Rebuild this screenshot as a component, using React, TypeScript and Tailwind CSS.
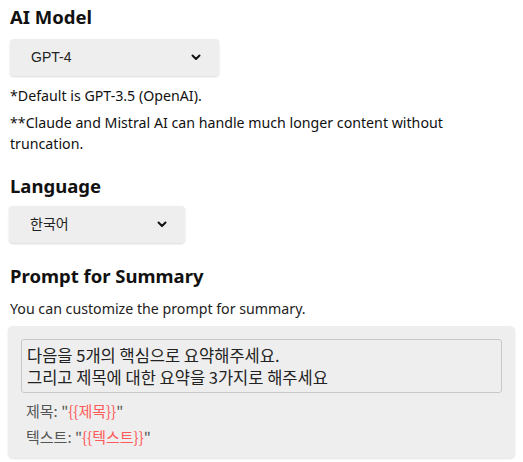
import React from "react";

const font = { fontFamily: '"Segoe UI", "Noto Sans", "Noto Sans CJK KR", sans-serif' };

function Chevron() {
  return (
    <svg width="10" height="7" viewBox="0 0 10 7" fill="none">
      <path d="M1.5 1.5 L5 5 L8.5 1.5" stroke="#111" strokeWidth="2" strokeLinecap="round" strokeLinejoin="round" />
    </svg>
  );
}

function Select({ value, width }: { value: string; width: string }) {
  return (
    <div
      className={`flex items-center justify-between h-[37px] rounded-[4px] bg-[#eeeeee] shadow-[0_1px_2px_rgba(0,0,0,0.15)] pl-[21px] pr-[18px] ${width}`}
    >
      <span className="text-[14px] text-[#222] font-['Liberation_Sans','Noto_Sans_CJK_KR',sans-serif]">{value}</span>
      <Chevron />
    </div>
  );
}

export default function App() {
  return (
    <div className="bg-white w-[523px] h-[462px] px-[10px] text-[#111]" style={font}>
      <h2 className="text-[18.5px] font-bold leading-[24px] pt-[5px]">AI Model</h2>
      <div className="mt-[10px]">
        <Select value="GPT-4" width="w-[209px]" />
      </div>
      <p className="text-[14.2px] leading-[21px] mt-[9px]">*Default is GPT-3.5 (OpenAI).</p>
      <p className="text-[14.2px] leading-[21px] mt-[6px]">
        **Claude and Mistral AI can handle much longer content without truncation.
      </p>
      <h2 className="text-[18.5px] font-bold leading-[24px] mt-[20px]">Language</h2>
      <div className="mt-[8px] -ml-[1px]">
        <Select value="한국어" width="w-[176px]" />
      </div>
      <h2 className="text-[18.5px] font-bold leading-[24px] mt-[21px]">Prompt for Summary</h2>
      <p className="text-[14.2px] leading-[21px] mt-[10px] text-[#222]">You can customize the prompt for summary.</p>
      <div className="mt-[7px] -ml-[2px] w-[507px] rounded-[5px] bg-[#eeeeee] shadow-[0_1px_2px_rgba(0,0,0,0.12)] pt-[13px] pb-[8px] px-[13px]">
        <div className="w-[481px] h-[54px] rounded-[3px] border border-[#c8c8c8] px-[5px] py-[4px] text-[16.5px] leading-[22px] text-[#222] font-['Noto_Sans_CJK_KR',sans-serif]">
          <div>다음을 5개의 핵심으로 요약해주세요.</div>
          <div>그리고 제목에 대한 요약을 3가지로 해주세요</div>
        </div>
        <div className="pl-[5px] mt-[5px] text-[15px] leading-[26px] text-[#555] font-['Noto_Sans_CJK_KR',sans-serif]">
          <div>
            제목: "<span className="text-[#ff5a5a]">{"{{제목}}"}</span>"
          </div>
          <div>
            텍스트: "<span className="text-[#ff5a5a]">{"{{텍스트}}"}</span>"
          </div>
        </div>
      </div>
    </div>
  );
}
